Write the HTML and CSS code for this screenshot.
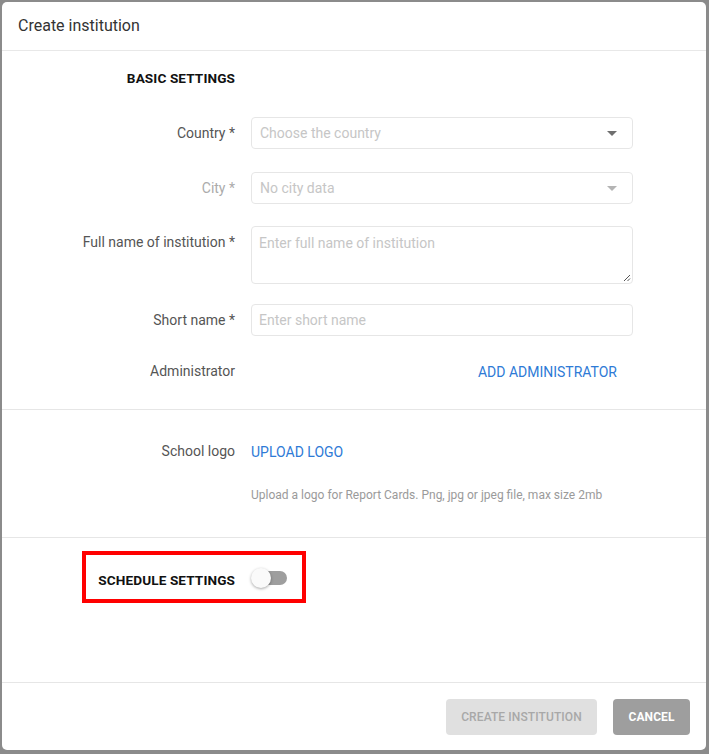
FILE: index.html
```html
<!DOCTYPE html>
<html>
<head>
<meta charset="utf-8">
<link rel="stylesheet" href="styles.css">
</head>
<body>
<div class="dialog">
  <div class="header">Create institution</div>
  <div class="section basic">
    <div class="row title-row">
      <div class="label title">BASIC SETTINGS</div>
    </div>
    <div class="row r-country">
      <div class="label">Country *</div>
      <div class="field select">
        <span class="ph">Choose the country</span>
        <span class="caret"></span>
      </div>
    </div>
    <div class="row r-city">
      <div class="label disabled">City *</div>
      <div class="field select">
        <span class="ph">No city data</span>
        <span class="caret light"></span>
      </div>
    </div>
    <div class="row r-full top">
      <div class="label">Full name of institution *</div>
      <div class="field textarea">
        <span class="ph">Enter full name of institution</span>
        <svg class="grip" width="9" height="9" viewBox="0 0 9 9"><path d="M8 2 L2 8 M8 5.5 L5.5 8" stroke="#555" stroke-width="1" fill="none"/></svg>
      </div>
    </div>
    <div class="row r-short">
      <div class="label">Short name *</div>
      <div class="field input"><span class="ph">Enter short name</span></div>
    </div>
    <div class="row r-admin">
      <div class="label">Administrator</div>
      <div class="admin-action"><span class="link pad">ADD ADMINISTRATOR</span></div>
    </div>
  </div>
  <div class="section logo">
    <div class="row r-logo">
      <div class="label">School logo</div>
      <div class="logo-action"><span class="link">UPLOAD LOGO</span></div>
    </div>
    <div class="row r-help">
      <div class="label"></div>
      <div class="help">Upload a logo for Report Cards. Png, jpg or jpeg file, max size 2mb</div>
    </div>
  </div>
  <div class="section schedule">
    <div class="highlight">
      <div class="label title sched">SCHEDULE SETTINGS</div>
      <div class="toggle"><span class="track"></span><span class="knob"></span></div>
    </div>
  </div>
  <div class="footer">
    <div class="btn disabled-btn">CREATE INSTITUTION</div>
    <div class="btn cancel">CANCEL</div>
  </div>
</div>
</body>
</html>
```
FILE: styles.css
```css
* { box-sizing: border-box; }
html, body { margin: 0; padding: 0; }
body {
  background: #8b8b8b;
  padding: 2px;
  font-family: Roboto, "Noto Sans", sans-serif;
  width: 709px;
  height: 754px;
  overflow: hidden;
}
.dialog {
  width: 704px;
  height: 748px;
  background: #fff;
  border-radius: 5px;
  display: flex;
  flex-direction: column;
  overflow: hidden;
}
.header {
  height: 49px;
  border-bottom: 1px solid #e8e8e8;
  padding: 0 16px;
  font-size: 16px;
  color: #333;
  line-height: 48px;
  flex: none;
}
.section { border-bottom: 1px solid #e6e6e6; flex: none; }
.basic { padding-top: 17px; padding-bottom: 20px; }
.row {
  display: grid;
  grid-template-columns: 233px 382px;
  column-gap: 16px;
  align-items: center;
}
.label {
  text-align: right;
  font-size: 14px;
  color: #555;
  line-height: 20px;
}
.label.disabled { color: #ababab; }
.title {
  font-weight: 700;
  color: #111;
  font-size: 13.6px;
  letter-spacing: 0.1px;
}
.title-row { height: 20px; }
.r-country { margin-top: 29px; }
.r-city { margin-top: 23px; }
.r-full { margin-top: 22px; align-items: start; }
.r-full .label { line-height: 33px; }
.r-short { margin-top: 20px; }
.r-admin { margin-top: 17px; height: 36px; }
.field {
  border: 1px solid #e6e6e6;
  border-radius: 4px;
  height: 32px;
  display: flex;
  align-items: center;
  padding: 0 8px;
  position: relative;
}
.input { padding-left: 7px; }
.textarea { height: 58px; align-items: flex-start; padding-top: 6px; padding-left: 7px; }
.ph { font-size: 14px; color: #c6c6c6; line-height: 20px; }
.caret {
  position: absolute;
  right: 15px;
  top: 13px;
  width: 0; height: 0;
  border-left: 5px solid transparent;
  border-right: 5px solid transparent;
  border-top: 5px solid #6f6f6f;
}
.caret.light { border-top-color: #b4b4b4; }
.grip { position: absolute; right: 1px; bottom: 1px; }
.admin-action { text-align: right; }
.link {
  color: #2e7ad6;
  font-size: 14px;
  font-weight: 400;
  letter-spacing: 0;
}
.link.pad { padding-right: 16px; }
.logo { padding-top: 23px; padding-bottom: 34px; }
.r-logo { height: 36px; }
.r-help { margin-top: 18px; }
.help { font-size: 12px; color: #9a9a9a; line-height: 16px; }
.schedule { flex: 1; padding: 13px 0 0 80px; border-bottom: 1px solid #e6e6e6; }
.highlight {
  width: 224px;
  height: 52px;
  border: 4px solid #ff0000;
  display: flex;
  align-items: center;
  gap: 16px;
  padding-top: 5px;
}
.sched { width: 149px; flex: none; }
.toggle { position: relative; width: 36px; height: 20px; margin-top: -4px; }
.track {
  position: absolute;
  left: 2px; top: 3px;
  width: 34px; height: 14px;
  border-radius: 7px;
  background: #9e9e9e;
}
.knob {
  position: absolute;
  left: 0; top: 0;
  width: 20px; height: 20px;
  border-radius: 50%;
  background: #fafafa;
  box-shadow: 0 1px 3px rgba(0,0,0,0.35);
}
.footer {
  height: 67px;
  flex: none;
  display: flex;
  justify-content: flex-end;
  align-items: flex-start;
  padding: 16px 16px 0 0;
  gap: 16px;
}
.btn {
  height: 36px;
  border-radius: 4px;
  font-size: 12px;
  font-weight: 500;
  line-height: 36px;
  text-align: center;
  letter-spacing: 0.1px;
}
.disabled-btn { width: 151px; background: #e0e0e0; color: #a8a8a8; }
.cancel { width: 77px; background: #9e9e9e; color: #fff; font-weight: 700; }
```
